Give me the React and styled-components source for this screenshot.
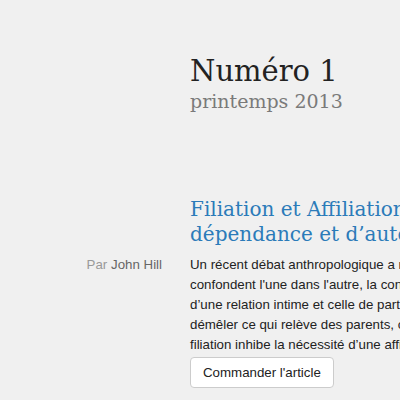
import React from 'react';
import styled, { createGlobalStyle } from 'styled-components';

const GlobalStyle = createGlobalStyle`
  html, body {
    margin: 0;
    padding: 0;
    background: #f0f0f0;
    overflow: hidden;
  }
`;

const issue = {
  number: 'Numéro 1',
  season: 'printemps 2013'
};

const article = {
  title: ['Filiation et Affiliation : la', 'dépendance et d’autonomie'],
  author: 'John Hill',
  lines: [
    'Un récent débat anthropologique a remis en question deux notions qui se',
    'confondent l\'une dans l\'autre, la convention de filiation, c\'est-à-dire celle',
    'd’une relation intime et celle de partenariat social. Il s’agit alors de',
    'démêler ce qui relève des parents, ce qui relève de l’institution, et si la',
    'filiation inhibe la nécessité d’une affiliation au groupe.'
  ]
};

function App() {
  return (
    <Page>
      <GlobalStyle />
      <IssueHeader>
        <IssueNumber>{issue.number}</IssueNumber>
        <IssueSeason>{issue.season}</IssueSeason>
      </IssueHeader>
      <Article>
        <Spacer />
        <ArticleTitle>
          {article.title[0]}<br />{article.title[1]}
        </ArticleTitle>
        <Byline>
          Par <AuthorName>{article.author}</AuthorName>
        </Byline>
        <Body>
          <Summary>
            {article.lines.map((line) => (
              <Line key={line}>{line}</Line>
            ))}
          </Summary>
          <OrderButton type="button">Commander l'article</OrderButton>
        </Body>
      </Article>
    </Page>
  );
}

const Page = styled.div`
  width: 720px;
  padding-top: 53px;
`;

const IssueHeader = styled.header`
  padding-left: 190px;
  font-family: 'DejaVu Serif', 'Liberation Serif', serif;
`;

const IssueNumber = styled.h1`
  margin: 0;
  color: #222;
  font-size: 29px;
  font-weight: normal;
  line-height: 36px;
`;

const IssueSeason = styled.h2`
  margin: 0;
  color: #7a7a7a;
  font-size: 19px;
  font-weight: normal;
  line-height: 24px;
`;

const Article = styled.article`
  display: grid;
  grid-template-columns: 162px 1fr;
  column-gap: 28px;
  margin-top: 84px;
`;

const Spacer = styled.div``;

const ArticleTitle = styled.h3`
  margin: 0 0 8px;
  color: #2b7bb9;
  font-family: 'DejaVu Serif', 'Liberation Serif', serif;
  font-size: 20px;
  font-weight: normal;
  line-height: 25px;
  white-space: nowrap;
`;

const Byline = styled.p`
  margin: 0;
  text-align: right;
  color: #999;
  font-family: 'Liberation Sans', Arial, sans-serif;
  font-size: 13.3px;
  line-height: 20px;
`;

const AuthorName = styled.span`
  color: #666;
`;

const Body = styled.div`
  font-family: 'Liberation Sans', Arial, sans-serif;
`;

const Summary = styled.p`
  margin: 0 0 2px;
  color: #222;
  font-size: 13.3px;
  line-height: 20px;
`;

const Line = styled.span`
  display: block;
  white-space: nowrap;
`;

const OrderButton = styled.button`
  padding: 6px 12px;
  background: #fff;
  border: 1px solid #ccc;
  border-radius: 4px;
  color: #222;
  font-family: 'Liberation Sans', Arial, sans-serif;
  font-size: 13.3px;
  line-height: 17px;
`;

export default App;
